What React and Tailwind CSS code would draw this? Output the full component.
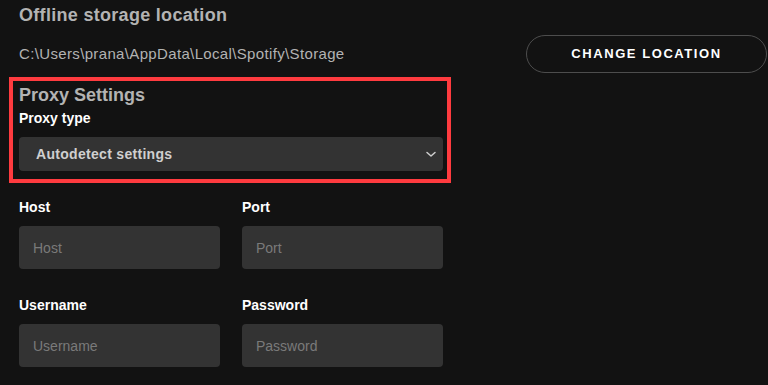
import React from "react";

function Field({ label, placeholder, top }) {
  return (
    <div className={top}>
      <div className="text-[14px] leading-[20px] font-bold text-white">{label}</div>
      <input
        placeholder={placeholder}
        className="mt-[9px] block h-[43px] w-full rounded-[4px] bg-[#333333] px-[14px] text-[14px] text-white outline-none placeholder:text-[#7a7a7a]"
      />
    </div>
  );
}

export default function App() {
  return (
    <div
      className="h-[385px] w-full overflow-hidden bg-[#121212] pl-[19px]"
      style={{ fontFamily: '"Liberation Sans", Arial, sans-serif' }}
    >
      {/* Offline storage */}
      <div className="pt-[3px] text-[18px] leading-[24px] font-bold tracking-[0.3px] text-[#b3b3b3]">
        Offline storage location
      </div>
      <div className="mt-[8px] flex h-[38px] items-center justify-between pr-[1px]">
        <span className="text-[15px] tracking-[0.35px] text-[#b3b3b3]">
          C:\Users\prana\AppData\Local\Spotify\Storage
        </span>
        <button className="h-[38px] w-[241px] rounded-full border border-[#4d4d4d] text-[13px] font-bold tracking-[0.12em] text-white">
          CHANGE LOCATION
        </button>
      </div>

      {/* Proxy settings (highlighted) */}
      <div className="mt-[4px] -ml-[10px] w-[442px] border-4 border-[#ff3b3f] pb-[8px] pl-[6px] pr-[4px] pt-[2px]">
        <div className="text-[18px] leading-[24px] font-bold text-[#b3b3b3]">Proxy Settings</div>
        <div className="mt-[1px] text-[14px] leading-[20px] font-bold text-white">Proxy type</div>
        <div className="mt-[9px] flex h-[34px] items-center justify-between rounded-[4px] bg-[#333333] pl-[17px] pr-[6px]">
          <span className="text-[14px] font-bold tracking-[0.3px] text-[#cfcfcf]">Autodetect settings</span>
          <svg width="12" height="12" viewBox="0 0 12 12" fill="none">
            <path d="M2 4.5l4 3.5 4-3.5" stroke="#cfcfcf" strokeWidth="1.5" strokeLinecap="round" strokeLinejoin="round" />
          </svg>
        </div>
      </div>

      {/* Host / Port / Username / Password */}
      <div className="grid w-[424px] grid-cols-2 gap-x-[22px]">
        <Field label="Host" placeholder="Host" top="mt-[14px]" />
        <Field label="Port" placeholder="Port" top="mt-[14px]" />
        <Field label="Username" placeholder="Username" top="mt-[26px]" />
        <Field label="Password" placeholder="Password" top="mt-[26px]" />
      </div>
    </div>
  );
}
